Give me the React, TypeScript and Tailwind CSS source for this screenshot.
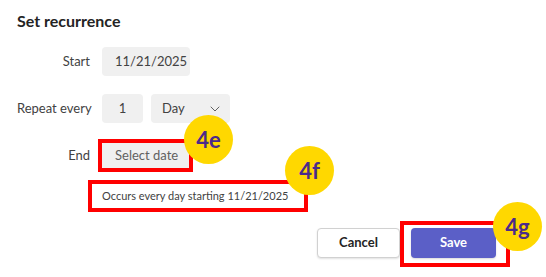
import { ChevronDown } from 'lucide-react';

function Badge({ label, className }: { label: string; className: string }) {
  return (
    <div
      className={`absolute w-[49px] h-[49px] rounded-full bg-[#ffd800] flex items-center justify-center text-[22px] font-bold text-[#4b2a8a] leading-none ${className}`}
    >
      {label}
    </div>
  );
}

export default function App() {
  return (
    <div
      className="relative w-[546px] h-[277px] bg-white text-[#424242] overflow-hidden"
      style={{ fontFamily: 'Lato, "Noto Sans", sans-serif' }}
    >
      <div className="pl-[17px] pt-[11px]">
        <h1 className="text-[16px] font-bold text-[#242424] leading-[20px]">Set recurrence</h1>

        <div className="mt-[16px] grid grid-cols-[73px_auto] gap-x-[12px] gap-y-[18px] items-center text-[13px]">
          <span className="text-right whitespace-nowrap">Start</span>
          <div className="w-[88px] h-[29px] rounded-[4px] bg-[#f0f0f0] flex items-center pl-[13px]">
            11/21/2025
          </div>

          <span className="text-right whitespace-nowrap">Repeat every</span>
          <div className="flex gap-[8px]">
            <div className="w-[41px] h-[29px] rounded-[4px] bg-[#f0f0f0] flex items-center justify-center">1</div>
            <div className="w-[79px] h-[29px] rounded-[4px] bg-[#f0f0f0] flex items-center justify-between pl-[11px] pr-[7px]">
              <span>Day</span>
              <ChevronDown size={16} strokeWidth={1.5} className="text-[#616161]" />
            </div>
          </div>

          <span className="text-right whitespace-nowrap">End</span>
          <div className="w-[88px] h-[29px] rounded-[4px] bg-[#f0f0f0] flex items-center pl-[13px] text-[#616161] whitespace-nowrap">
            Select date
          </div>
        </div>

        <div className="mt-[10px] ml-[75px] h-[32px] w-[220px] flex items-center pl-[10px] text-[11px] text-[#424242] whitespace-nowrap">
          Occurs every day starting 11/21/2025
        </div>

        <div className="mt-[16px] pr-[50px] flex justify-end gap-[11px] text-[13px] font-bold">
          <button className="w-[83px] h-[30px] rounded-[4px] border border-[#d1d1d1] bg-white text-[#242424] shadow-[0_1px_2px_rgba(0,0,0,0.12)]">
            Cancel
          </button>
          <button className="w-[85px] h-[30px] rounded-[4px] bg-[#5b5fc7] text-white shadow-[0_1px_2px_rgba(0,0,0,0.15)]">
            Save
          </button>
        </div>
      </div>

      {/* annotation boxes */}
      <div className="absolute left-[98px] top-[139px] w-[95px] h-[33px] border-[4px] border-[#ff0000]" />
      <div className="absolute left-[88px] top-[180px] w-[220px] h-[32px] border-[4px] border-[#ff0000]" />
      <div className="absolute left-[400px] top-[221px] w-[110px] h-[46px] border-[4px] border-[#ff0000]" />

      <Badge label="4e" className="left-[184px] top-[115px]" />
      <Badge label="4f" className="left-[285px] top-[146px]" />
      <Badge label="4g" className="left-[493px] top-[202px]" />
    </div>
  );
}
